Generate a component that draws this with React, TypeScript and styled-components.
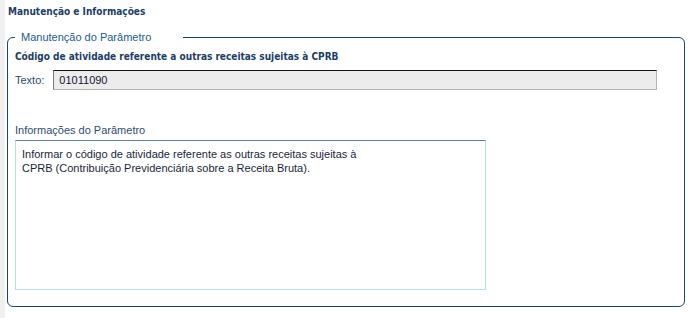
import React from 'react';
import styled, { createGlobalStyle } from 'styled-components';

const GlobalStyle = createGlobalStyle`
  html, body {
    margin: 0;
    padding: 0;
    background: #ffffff;
  }
`;

const Page = styled.div`
  box-sizing: border-box;
  height: 318px;
  border-left: 5px solid #f0f0f0;
  padding: 5px 5px 0 2px;
  font-family: 'Liberation Sans', Arial, sans-serif;
`;

const Title = styled.div`
  font-family: 'DejaVu Sans Condensed', 'DejaVu Sans', Verdana, sans-serif;
  font-weight: bold;
  font-size: 10px;
  line-height: 14px;
  color: #1b3d66;
  margin-left: 1px;
  margin-bottom: 11px;
`;

const Fieldset = styled.fieldset`
  box-sizing: border-box;
  margin: 0;
  height: 277px;
  width: 678px;
  border: 1px solid #14466f;
  border-radius: 6px;
  padding: 6px 7px 0 7px;
  min-width: 0;
`;

const Legend = styled.legend`
  margin-left: 0;
  padding: 0 32px 0 6px;
  font-size: 11px;
  line-height: 14px;
  color: #225b94;
`;

const Heading = styled.div`
  font-family: 'DejaVu Sans Condensed', 'DejaVu Sans', Verdana, sans-serif;
  font-weight: bold;
  font-size: 10px;
  line-height: 14px;
  color: #1b3d66;
  margin-bottom: 6px;
`;

const FieldRow = styled.div`
  display: flex;
  align-items: center;
  gap: 9px;
`;

const Label = styled.span`
  font-size: 11px;
  color: #2b4d73;
`;

const TextInput = styled.div`
  box-sizing: border-box;
  width: 604px;
  height: 20px;
  background: #ececec;
  border-top: 1px solid #111111;
  border-left: 1px solid #7a7a7a;
  border-right: 1px solid #b5b5b5;
  border-bottom: 1px solid #b5b5b5;
  padding: 2px 0 0 5px;
  font-size: 11px;
  line-height: 15px;
  color: #151530;
`;

const SectionLabel = styled.div`
  margin-top: 33px;
  margin-bottom: 3px;
  font-size: 11px;
  line-height: 14px;
  color: #2b4d73;
`;

const TextArea = styled.div`
  box-sizing: border-box;
  width: 471px;
  height: 150px;
  border: 1px solid #b9dcf7;
  border-top-color: #5b7fa2;
  padding: 6px 0 0 6px;
  font-size: 11px;
  line-height: 14px;
  color: #1a1f3a;
`;

export default function App(): JSX.Element {
  return (
    <>
      <GlobalStyle />
      <Page>
        <Title>Manutenção e Informações</Title>
        <Fieldset>
          <Legend>Manutenção do Parâmetro</Legend>
          <Heading>Código de atividade referente a outras receitas sujeitas à CPRB</Heading>
          <FieldRow>
            <Label>Texto:</Label>
            <TextInput>01011090</TextInput>
          </FieldRow>
          <SectionLabel>Informações do Parâmetro</SectionLabel>
          <TextArea>
            Informar o código de atividade referente as outras receitas sujeitas à
            <br />
            CPRB (Contribuição Previdenciária sobre a Receita Bruta).
          </TextArea>
        </Fieldset>
      </Page>
    </>
  );
}
